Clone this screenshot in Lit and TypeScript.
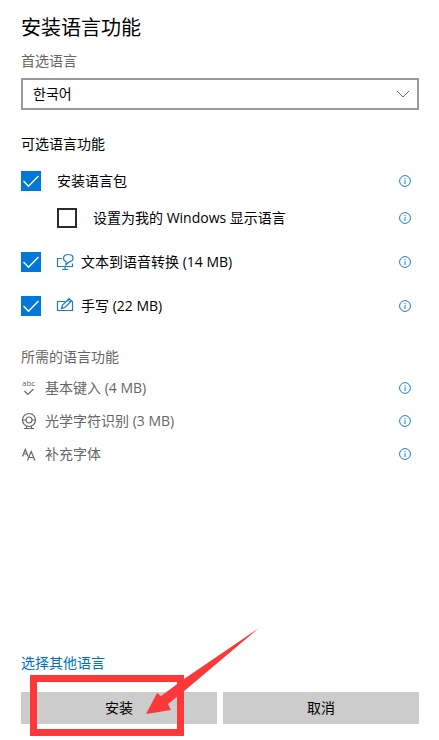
import { LitElement, html, css, svg, nothing } from "lit";
import { customElement, property } from "lit/decorators.js";

const icons = {
  speech: svg`<path d="M5 5.500H.5v8h15V10.500M8 13.500v3M5 16.500h6" /><path d="M9 8.600C7.300 8.100 6.500 7 6.500 5.500 6.500 3 8.500 1.500 11.200 1.500s4.800 1.400 4.800 3.600-1.600 3.500-3.800 3.700L9 11.800z" />`,
  pen: svg`<path d="M8.500 4.500H.5v9h15V4.500H13.500" /><path d="M4.500 11.500l1-3.500 6.700-6.300 2.300 2.300-6.700 6.500z M10.800 3l2.300 2.300" />`,
  typing: svg`<text x="1" y="7">abc</text><path d="M3.500 12l3.300 3.500L12.500 10" />`,
  ocr: svg`<circle cx="8" cy="8" r="6.500" /><circle cx="8" cy="8" r="3" /><path d="M1.500 8H5M11 8h3.500M5.500 14v2.500M10.500 14v2.500M3 16.500h10" />`,
  fonts: svg`<path d="M1.500 11.500L4.300 4.500 7 11.500M2.500 9h3.600M6.500 15.500L10.200 6.500l3.800 9M7.800 12.500h4.800" />`,
};

type IconName = keyof typeof icons;

@customElement("info-button")
export class InfoButton extends LitElement {
  static styles = css`
    :host { display: flex; margin: 0 4px 0 auto; }
    .info { display: flex; padding: 4px; margin: 0; border: 0; background: none; color: #1a7cc9; }
    .glyph { width: 12px; height: 12px; fill: none; stroke: currentColor; }
  `;
  render() {
    return html`<button class="info" type="button" aria-label="详细信息">
      <svg class="glyph" viewBox="0 0 12 12"><circle cx="6" cy="6" r="5.400" /><path d="M6 5v4M6 3v1" /></svg>
    </button>`;
  }
}

@customElement("feature-icon")
export class FeatureIcon extends LitElement {
  @property() name: IconName = "speech";
  static styles = css`
    :host { display: flex; }
    .glyph { width: 16px; height: 18px; fill: none; stroke: currentColor; stroke-width: 1.200; overflow: visible; }
    text { font: 8px "Open Sans", sans-serif; fill: currentColor; stroke: none; }
  `;
  render() {
    return html`<svg class="glyph" viewBox="0 0 16 18" aria-hidden="true">${icons[this.name]}</svg>`;
  }
}

@customElement("feature-option")
export class FeatureOption extends LitElement {
  @property() label = "";
  @property() icon?: IconName;
  @property({ type: Boolean }) checked = false;
  static styles = css`
    :host { display: flex; align-items: center; height: 20px; }
    .option { display: flex; align-items: center; gap: 16px; line-height: 20px; }
    .tick { display: grid; width: 20px; height: 20px; }
    .box, .mark { grid-area: 1 / 1; width: 20px; height: 20px; }
    .box { appearance: none; box-sizing: border-box; margin: 0; border: 2px solid #2b2b2b; background: #fff; }
    .box:checked { border-color: #0078d7; background: #0078d7; }
    .mark { fill: none; stroke: #fff; stroke-width: 1.400; pointer-events: none; visibility: hidden; }
    .box:checked + .mark { visibility: visible; }
    .text { display: flex; align-items: center; gap: 8px; white-space: pre; }
    feature-icon { color: #1a7cc9; }
  `;
  render() {
    return html`<label class="option">
        <span class="tick">
          <input class="box" type="checkbox" .checked=${this.checked} />
          <svg class="mark" viewBox="0 0 20 20"><path d="M2.500 10l5 5.200L17.500 5" /></svg>
        </span>
        <span class="text">${this.icon ? html`<feature-icon .name=${this.icon}></feature-icon>` : nothing}<span>${this.label}</span></span>
      </label>
      <info-button></info-button>`;
  }
}

@customElement("app-root")
export class AppRoot extends LitElement {
  static styles = css`
    :host { display: block; color: #000; background: #fff; font: 14px/20px "Open Sans", "Noto Sans CJK SC", "Noto Sans CJK KR", sans-serif; }
    .page { box-sizing: border-box; display: flex; flex-direction: column; min-height: 100vh; padding: 14px 20px 16px 21px; }
    .title { margin: 0; font-size: 20px; line-height: 28px; font-weight: 400; }
    .caption { margin-top: 9px; color: #666; }
    .picker { display: grid; align-items: center; margin-top: 7px; }
    .select { grid-area: 1 / 1; appearance: none; box-sizing: border-box; width: 100%; height: 32px; margin: 0; padding: 0 32px 0 10px; border: 2px solid #999; border-radius: 0; background: #fff; color: inherit; font: inherit; }
    .chevron { grid-area: 1 / 1; justify-self: end; width: 14px; height: 8px; margin-right: 9px; fill: none; stroke: #666; pointer-events: none; }
    .heading { margin: 24px 0 0; font-size: 14px; line-height: 20px; font-weight: 400; }
    .options { display: flex; flex-direction: column; gap: 24px; margin-top: 17px; }
    .group { display: flex; flex-direction: column; gap: 17px; }
    .nested { margin-left: 36px; }
    .muted { color: #666; }
    .required-heading { margin-top: 31px; }
    .required { display: flex; flex-direction: column; gap: 13px; margin: 11px 0 0; padding: 0; list-style: none; color: #666; }
    .item { display: flex; align-items: center; gap: 8px; height: 20px; }
    .footer { position: relative; margin-top: auto; }
    .other { display: inline-block; color: #0070c4; text-decoration: none; }
    .actions { display: grid; grid-template-columns: 1fr 1fr; gap: 6px; margin-top: 19px; }
    .action { height: 32px; margin: 0; padding: 0; border: 0; background: #ccc; color: #000; font: inherit; }
    .callout { position: absolute; left: 9px; bottom: -12px; width: 230px; height: 109px; pointer-events: none; }
    .frame { fill: none; stroke: #fd3838; stroke-width: 7; }
    .arrow { fill: #fd3838; }
  `;

  private required: { icon: IconName; label: string }[] = [
    { icon: "typing", label: "基本键入 (4 MB)" },
    { icon: "ocr", label: "光学字符识别 (3 MB)" },
    { icon: "fonts", label: "补充字体" },
  ];

  render() {
    return html`<main class="page">
      <h1 class="title">安装语言功能</h1>
      <label class="caption" for="language">首选语言</label>
      <div class="picker">
        <select class="select" id="language"><option lang="ko">한국어</option></select>
        <svg class="chevron" viewBox="0 0 14 8" aria-hidden="true"><path d="M1 1l6 6 6-6" /></svg>
      </div>
      <h2 class="heading">可选语言功能</h2>
      <div class="options">
        <div class="group">
          <feature-option label="安装语言包" checked></feature-option>
          <feature-option class="nested" label="设置为我的 Windows 显示语言"></feature-option>
        </div>
        <feature-option icon="speech" label="文本到语音转换 (14 MB)" checked></feature-option>
        <feature-option icon="pen" label="手写 (22 MB)" checked></feature-option>
      </div>
      <h2 class="heading muted required-heading">所需的语言功能</h2>
      <ul class="required">
        ${this.required.map((f) => html`<li class="item"><feature-icon .name=${f.icon}></feature-icon><span>${f.label}</span><info-button></info-button></li>`)}
      </ul>
      <footer class="footer">
        <a class="other" href="#languages">选择其他语言</a>
        <div class="actions">
          <button class="action" type="button">安装</button>
          <button class="action" type="button">取消</button>
        </div>
        <svg class="callout" viewBox="0 0 230 109" aria-hidden="true">
          <rect class="frame" x="3.500" y="51.500" width="147" height="54" />
          <path class="arrow" d="M229 1L153 65 138 77 141 83 116 87 127 66 131 69 154 52z" />
        </svg>
      </footer>
    </main>`;
  }
}
